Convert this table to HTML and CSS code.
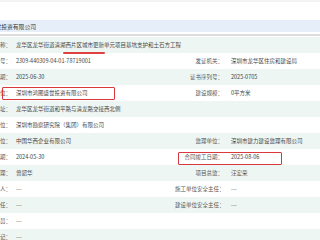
FILE: index.html
```html
<!DOCTYPE html>
<html lang="zh-CN">
<head>
<meta charset="utf-8">
<link rel="stylesheet" href="styles.css">
</head>
<body>
<div class="page">
  <div class="topband"></div>
  <div class="header"><span class="clip"><span>深圳市鸿图盛世投资有限公司</span></span></div>
  <div class="rule"></div>
  <div class="table">
    <div class="row alt">
      <span class="lab1"><span>工程名称：</span></span>
      <span class="val1 wide">龙华区龙华街道清湖西片区城市更新单元项目基坑支护和土石方工程</span>
    </div>
    <div class="row">
      <span class="lab1"><span>项目编号：</span></span>
      <span class="val1">2309-440309-04-01-78719001</span>
      <span class="lab2">发证机关：</span>
      <span class="val2">深圳市龙华区住房和建设局</span>
    </div>
    <div class="row alt">
      <span class="lab1"><span>发证日期：</span></span>
      <span class="val1">2025-06-30</span>
      <span class="lab2">证书序列号：</span>
      <span class="val2">2025-0705</span>
    </div>
    <div class="row">
      <span class="lab1"><span>建设单位：</span></span>
      <span class="val1">深圳市鸿图盛世投资有限公司</span>
      <span class="lab2">建设规模：</span>
      <span class="val2">0平方米</span>
    </div>
    <div class="row alt">
      <span class="lab1"><span>工程地址：</span></span>
      <span class="val1">龙华区龙华街道和平路与清龙路交接西北侧</span>
    </div>
    <div class="row">
      <span class="lab1"><span>勘察单位：</span></span>
      <span class="val1">深圳市勘察研究院（集团）有限公司</span>
    </div>
    <div class="row alt">
      <span class="lab1"><span>施工单位：</span></span>
      <span class="val1">中国华西企业有限公司</span>
      <span class="lab2">监理单位：</span>
      <span class="val2">深圳市建力建设监理有限公司</span>
    </div>
    <div class="row">
      <span class="lab1"><span>合同开工日期：</span></span>
      <span class="val1">2024-05-30</span>
      <span class="lab2">合同竣工日期：</span>
      <span class="val2">2025-08-06</span>
    </div>
    <div class="row alt">
      <span class="lab1"><span>项目经理：</span></span>
      <span class="val1">曾韶华</span>
      <span class="lab2">项目总监：</span>
      <span class="val2">汪宏荣</span>
    </div>
    <div class="row">
      <span class="lab1"><span>技术负责人：</span></span>
      <span class="val1">---</span>
      <span class="lab2">施工单位安全主任：</span>
      <span class="val2">---</span>
    </div>
    <div class="row alt">
      <span class="lab1"><span>安全主任：</span></span>
      <span class="val1">---</span>
      <span class="lab2">建设单位安全主任：</span>
      <span class="val2">---</span>
    </div>
    <div class="row">
      <span class="lab1"><span>专职安全员：</span></span>
      <span class="val1">---</span>
    </div>
    <div class="row alt">
      <span class="lab1"><span>备注登记：</span></span>
      <span class="val1">---</span>
    </div>
  </div>
  <div class="mark underline"></div>
  <div class="mark box1"></div>
  <div class="mark box2"></div>
</div>
</body>
</html>
```
FILE: styles.css
```css
html, body {
  margin: 0;
  padding: 0;
  background: #ffffff;
}
.page {
  position: relative;
  width: 320px;
  height: 240px;
  overflow: hidden;
  font-family: "Noto Sans CJK SC", "Noto Sans", sans-serif;
  font-size: 5.5px;
  color: #444;
}
.topband {
  height: 2px;
  background: #f3f3f3;
  margin-bottom: 18px;
}
.header {
  height: 12px;
  background: #e6eff9;
  display: flex;
  align-items: center;
  font-size: 5.8px;
  color: #333;
}
.clip {
  width: 36px;
  display: flex;
  justify-content: flex-end;
  overflow: hidden;
  white-space: nowrap;
}
.rule {
  height: 2px;
  background: #dddddd;
  margin: 2px 0 1px;
}
.row {
  height: 16px;
  display: flex;
  align-items: center;
  white-space: nowrap;
}
.row.alt {
  background: #eef6f3;
}
.lab1 {
  width: 11px;
  flex: none;
  display: flex;
  justify-content: flex-end;
  overflow: hidden;
  color: #555;
}
.val1 {
  margin-left: 5px;
  width: 159px;
  flex: none;
}
.val1.wide {
  width: auto;
}
.lab2 {
  width: 48px;
  flex: none;
  text-align: right;
  color: #555;
}
.val2 {
  margin-left: 8px;
}
.mark {
  position: absolute;
}
.underline {
  left: 63px;
  top: 52px;
  width: 42px;
  height: 2px;
  border-radius: 1px;
  background: #e0403f;
}
.box1 {
  left: 2px;
  top: 87px;
  width: 111px;
  height: 11px;
  border: 1px solid #d9393a;
  border-radius: 1px;
}
.box2 {
  left: 178px;
  top: 152px;
  width: 102px;
  height: 11px;
  border: 1px solid #d9393a;
  border-radius: 1px;
}
```
